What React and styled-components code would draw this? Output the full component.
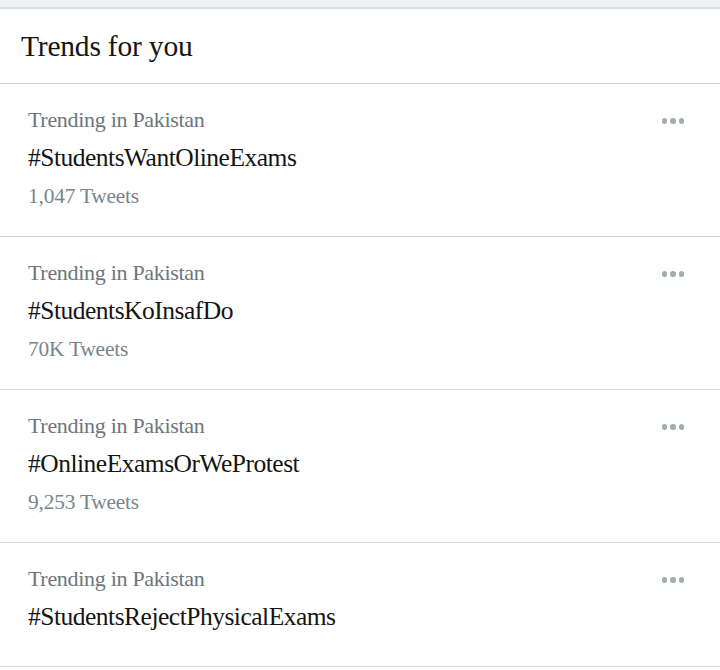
import React from "react";
import styled, { createGlobalStyle } from "styled-components";

const Global = createGlobalStyle`
  html, body { margin: 0; padding: 0; background: #ffffff; }
  body { font-family: "Liberation Serif", "DejaVu Serif", serif; }
`;

const Panel = styled.div`
  width: 720px;
  height: 670px;
  background: #fff;
  overflow: hidden;
  display: flex;
  flex-direction: column;
`;

const TopStrip = styled.div`
  flex-shrink: 0;
  height: 7px;
  background: #eef2f5;
  border-bottom: 2px solid #d9dee2;
`;

const Header = styled.div`
  flex-shrink: 0;
  height: 75px;
  display: flex;
  align-items: center;
  padding-left: 21px;
  border-bottom: 1.5px solid #d4d4d4;
  box-sizing: border-box;
`;

const Title = styled.h2`
  margin: 0;
  font-size: 29.5px;
  font-weight: 400;
  color: #141414;
  letter-spacing: -0.2px;
`;

const Row = styled.div`
  flex-shrink: 0;
  height: ${(p) => (p.$short ? "124px" : "153px")};
  box-sizing: border-box;
  border-bottom: 1.5px solid #d4d4d4;
  padding: 22px 36px 0 28px;
  display: flex;
  justify-content: space-between;
  align-items: flex-start;
`;

const Info = styled.div`
  display: flex;
  flex-direction: column;
`;

const Context = styled.div`
  font-size: 22px;
  line-height: 28px;
  color: #6b767e;
  letter-spacing: -0.3px;
`;

const Tag = styled.div`
  font-size: 25.5px;
  line-height: 28px;
  margin-top: 10px;
  color: #141414;
  letter-spacing: -0.5px;
`;

const Count = styled.div`
  font-size: 21.4px;
  line-height: 28px;
  margin-top: 10px;
  color: #7a848b;
  letter-spacing: -0.2px;
`;

const More = styled.div`
  display: flex;
  gap: 3px;
  margin-top: 12px;
`;

const Dot = styled.span`
  width: 5.5px;
  height: 5.5px;
  border-radius: 50%;
  background: #a4abb1;
`;

const trends = [
  { tag: "#StudentsWantOlineExams", count: "1,047 Tweets" },
  { tag: "#StudentsKoInsafDo", count: "70K Tweets" },
  { tag: "#OnlineExamsOrWeProtest", count: "9,253 Tweets" },
  { tag: "#StudentsRejectPhysicalExams" },
];

export default function App() {
  return (
    <>
      <Global />
      <Panel>
        <TopStrip />
        <Header>
          <Title>Trends for you</Title>
        </Header>
        {trends.map((t) => (
          <Row key={t.tag} $short={!t.count}>
            <Info>
              <Context>Trending in Pakistan</Context>
              <Tag>{t.tag}</Tag>
              {t.count && <Count>{t.count}</Count>}
            </Info>
            <More>
              <Dot />
              <Dot />
              <Dot />
            </More>
          </Row>
        ))}
      </Panel>
    </>
  );
}
